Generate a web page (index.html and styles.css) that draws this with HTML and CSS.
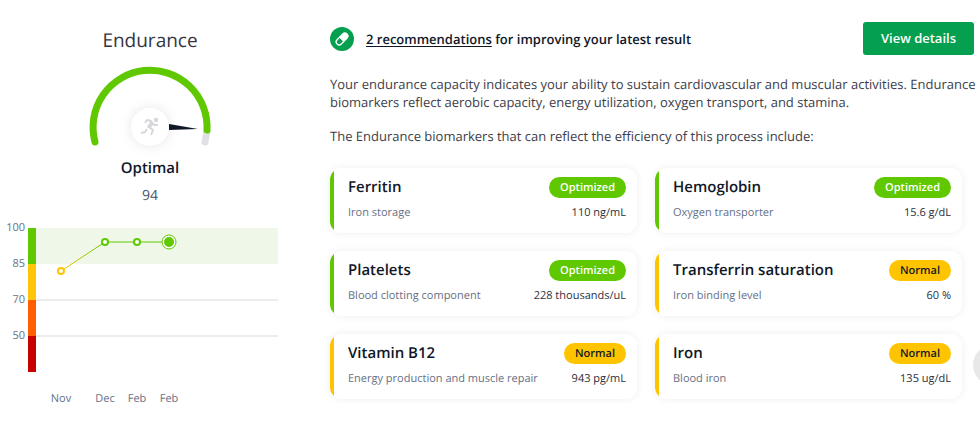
FILE: index.html
```html
<!DOCTYPE html>
<html lang="en">

<head>
   <meta charset="utf-8">
   <title>Endurance</title>
   <link rel="stylesheet" href="styles.css">
</head>

<body>
   <main class="page">
      <section class="score">
         <h1>Endurance</h1>
         <svg class="gauge" viewBox="0 0 124 84" width="124" height="84" aria-hidden="true">
            <path class="gauge-track" d="M119 65 Q118 71 117 76" />
            <path class="gauge-value" d="M7 76 A57 57 0 1 1 119 64" />
            <circle class="gauge-hub" cx="62" cy="61" r="19" />
            <path class="needle" d="M81 58 L110 63 L81 64 Z" />
            <g class="runner" transform="translate(0 -2)">
               <circle cx="68" cy="56" r="2.2" />
               <path d="M57 59 L59 56 L63 57 L66 61 L70 61" />
               <path class="runner-body" d="M64 58.500 L60.500 64" />
               <path d="M61 63 L65 66 L63 71 M59 65 L57 68 L53 69" />
            </g>
         </svg>
         <h2>Optimal</h2>
         <p class="score-value">94</p>

         <svg class="chart" viewBox="0 0 300 190" width="300" height="190" role="img" aria-label="Endurance history">
            <defs>
               <linearGradient id="rise" x1="61" y1="51" x2="105" y2="22" gradientUnits="userSpaceOnUse">
                  <stop offset="0" stop-color="#ffc400" />
                  <stop offset="1" stop-color="#5fc800" />
               </linearGradient>
            </defs>
            <rect x="36" y="8" width="242" height="36" fill="#eff7e9" />
            <path class="grid-line" d="M36 80 H278 M36 116 H278" />
            <rect x="28" y="8" width="8" height="36" fill="#5fc800" />
            <rect x="28" y="44" width="8" height="36" fill="#ffc608" />
            <rect x="28" y="80" width="8" height="36" fill="#ff5f00" />
            <rect x="28" y="116" width="8" height="36" fill="#c80000" />
            <g class="axis-y">
               <text x="25" y="11">100</text>
               <text x="25" y="47">85</text>
               <text x="25" y="83">70</text>
               <text x="25" y="119">50</text>
            </g>
            <path d="M61 51 L105 22" stroke="url(#rise)" />
            <path d="M105 22 H169" stroke="#5fc800" />
            <circle class="dot dot-normal" cx="61" cy="51" r="3" />
            <circle class="dot" cx="105" cy="22" r="3" />
            <circle class="dot" cx="137" cy="22" r="3" />
            <circle class="ring" cx="169" cy="22" r="7" />
            <circle cx="169" cy="22" r="5" fill="#5fc800" />
            <g class="axis-x">
               <text x="61" y="182">Nov</text>
               <text x="105" y="182">Dec</text>
               <text x="137" y="182">Feb</text>
               <text x="169" y="182">Feb</text>
            </g>
         </svg>
      </section>

      <section class="details">
         <header class="details-head">
            <svg class="pill" viewBox="0 0 24 24" width="24" height="24" aria-hidden="true">
               <circle cx="12" cy="12" r="12" fill="#05a04f" />
               <g transform="rotate(-45 12 12)">
                  <rect x="5" y="9" width="14" height="6" rx="3" fill="none" stroke="#fff" stroke-width="1.3" />
                  <path d="M11 9 H16 A3 3 0 0 1 16 15 H11 Z" fill="#fff" />
               </g>
            </svg>
            <p><a href="#">2 recommendations</a> for improving your latest result</p>
            <button class="view" type="button">View details</button>
         </header>

         <p class="text">Your endurance capacity indicates your ability to sustain cardiovascular and muscular activities. Endurance biomarkers reflect aerobic capacity, energy utilization, oxygen transport, and stamina.</p>
         <p class="text">The Endurance biomarkers that can reflect the efficiency of this process include:</p>

         <div class="cards">
            <article class="card optimized">
               <h3>Ferritin</h3>
               <span class="badge">Optimized</span>
               <p class="about">Iron storage</p>
               <p class="value">110 ng/mL</p>
            </article>
            <article class="card optimized">
               <h3>Hemoglobin</h3>
               <span class="badge">Optimized</span>
               <p class="about">Oxygen transporter</p>
               <p class="value">15.6 g/dL</p>
            </article>
            <article class="card optimized">
               <h3>Platelets</h3>
               <span class="badge">Optimized</span>
               <p class="about">Blood clotting component</p>
               <p class="value">228 thousands/uL</p>
            </article>
            <article class="card normal">
               <h3>Transferrin saturation</h3>
               <span class="badge">Normal</span>
               <p class="about">Iron binding level</p>
               <p class="value">60 %</p>
            </article>
            <article class="card normal">
               <h3>Vitamin B12</h3>
               <span class="badge">Normal</span>
               <p class="about">Energy production and muscle repair</p>
               <p class="value">943 pg/mL</p>
            </article>
            <article class="card normal">
               <h3>Iron</h3>
               <span class="badge">Normal</span>
               <p class="about">Blood iron</p>
               <p class="value">135 ug/dL</p>
            </article>
         </div>
      </section>
   </main>
   <button class="floating" type="button" aria-label="Next"></button>
</body>

</html>
```
FILE: styles.css
```css
body {
   margin: 0;
   background: #fff;
   color: #101828;
   font-family: "Open Sans", sans-serif;
   text-rendering: geometricPrecision;
   overflow-x: hidden;
}

h1, h2, h3, p {
   margin: 0;
}

.page {
   display: grid;
   grid-template-columns: 300px 1fr;
   column-gap: 30px;
   padding-top: 22px;
}

.score {
   display: flex;
   flex-direction: column;
   align-items: center;
}

.score h1 {
   margin-top: 4px;
   color: #34343f;
   font-size: 19px;
   font-weight: 500;
   line-height: 28px;
}

.gauge {
   margin-top: 12px;
   overflow: visible;
}

.gauge-track,
.gauge-value {
   fill: none;
   stroke: #dfe1e5;
   stroke-width: 7;
   stroke-linecap: round;
}

.gauge-value {
   stroke: #5fc800;
}

.gauge-hub {
   fill: #fff;
   filter: drop-shadow(0 0 6px rgba(0, 0, 0, .1));
}

.needle {
   fill: #101828;
}

.runner {
   fill: #d5d7da;
}

.runner path {
   fill: none;
   stroke: #d5d7da;
   stroke-width: 2;
   stroke-linejoin: round;
}

.runner .runner-body {
   stroke-width: 4;
}

.score h2 {
   margin-top: 8px;
   font-size: 15px;
   font-weight: 600;
   line-height: 20px;
}

.score-value {
   margin-top: 8px;
   color: #475467;
   font-size: 14px;
   line-height: 20px;
}

.chart {
   margin-top: 14px;
}

.grid-line {
   stroke: #ececec;
   stroke-width: 2;
}

.axis-y,
.axis-x {
   fill: #667085;
   font-size: 11px;
}

.axis-y {
   text-anchor: end;
}

.axis-x {
   text-anchor: middle;
}

.dot {
   fill: #fff;
   stroke: #5fc800;
   stroke-width: 2;
}

.dot-normal {
   stroke: #ffc400;
}

.ring {
   fill: #fff;
   stroke: #5fc800;
}

.details-head {
   display: flex;
   align-items: center;
   gap: 12px;
   margin-bottom: 20px;
   padding-right: 6px;
   font-size: 13px;
   font-weight: 600;
}

.details-head a {
   color: inherit;
   text-underline-offset: 2px;
}

.view {
   margin-left: auto;
   padding: 0 18px;
   border: 0;
   border-radius: 3px;
   background: #05a04f;
   color: #fff;
   font: 600 13px/33px "Open Sans", sans-serif;
}

.text {
   margin-bottom: 16px;
   color: #3d3d49;
   font-size: 13px;
   line-height: 18px;
}

.cards {
   display: grid;
   grid-template-columns: 1fr 1fr;
   gap: 18px;
   margin-top: 23px;
   padding-right: 18px;
}

.card {
   display: grid;
   grid-template-columns: 1fr auto;
   align-items: center;
   row-gap: 6px;
   padding: 9px 11px 11px 18px;
   border-radius: 12px;
   background: linear-gradient(to right, #5fc800 4px, #fff 4px);
   box-shadow: 0 0 8px rgba(0, 0, 0, .07);
}

.card h3 {
   font-size: 15px;
   font-weight: 600;
   line-height: 21px;
}

.badge {
   justify-self: end;
   padding: 0 11px;
   border-radius: 11px;
   background: #5fc800;
   color: #fff;
   font-size: 11px;
   font-weight: 600;
   line-height: 21px;
}

.about,
.value {
   color: #667085;
   font-size: 11px;
   line-height: 18px;
}

.value {
   color: #2b2f3c;
   text-align: right;
}

.normal {
   background: linear-gradient(to right, #ffc400 4px, #fff 4px);
}

.normal .badge {
   background: #ffc400;
   color: #101828;
}

/* sits half outside the window edge */
.floating {
   position: fixed;
   right: -33px;
   top: 345px;
   width: 40px;
   height: 40px;
   border: 0;
   border-radius: 50%;
   background: #e8e8e8;
}
```
